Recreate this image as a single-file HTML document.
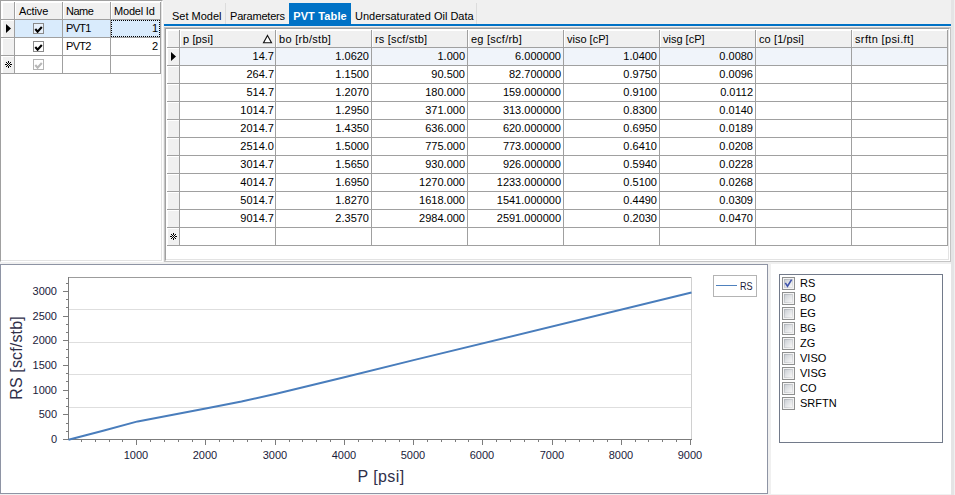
<!DOCTYPE html>
<html><head><meta charset="utf-8">
<style>
*{box-sizing:border-box;margin:0;padding:0}
html,body{width:955px;height:495px;overflow:hidden;background:#f0f0f0}
body{position:relative;font-family:"Liberation Sans","DejaVu Sans",sans-serif;font-size:11px;color:#000}
.abs{position:absolute}
/* left panel */
#lp{left:0;top:0;width:163px;height:262px;background:#fff;border-left:1px solid #a0a0a0;border-top:1px solid #a0a0a0;border-right:1px solid #fff;border-bottom:1px solid #fff;box-shadow:inset -1px -1px 0 #e3e3e3;overflow:hidden}
.cell{position:absolute;height:18px;line-height:17px;white-space:nowrap;overflow:hidden}
.hd{background:#f0f0f0;border-right:1px solid #a0a0a0;border-bottom:1px solid #a0a0a0;box-shadow:inset 1px 1px 0 #fff}
.t2{box-shadow:inset 1px 2px 0 #fff}
.l2{box-shadow:inset 2px 1px 0 #fff}
.tl2{box-shadow:inset 2px 2px 0 #fff}
.c{background:#fff;border-right:1px solid #a0a0a0;border-bottom:1px solid #a0a0a0}
.r{text-align:right;padding-right:2px}
.l{text-align:left;padding-left:3px}
.sel{background:#d9ebfc}
.sel .cb{background:#e8f1fb}
.f{background:#f0f4fa}
.lcb{position:absolute;left:0;top:0;width:13px;height:13px;border:1px solid #8e8f8f;background:linear-gradient(135deg,#cdd1d6,#f7f7f7) 2px 2px/7px 7px no-repeat,linear-gradient(135deg,#aeb3b9,#e9e9ea) 1px 1px/9px 9px no-repeat,#f4f4f4}
.cb{position:absolute;width:11px;height:11px;border:1px solid #8a8a8a;background:#fff}
/* tabs */
.tab{position:absolute;top:5px;height:19px;line-height:22px;font-size:11px;white-space:nowrap}
</style></head><body>

<!-- LEFT PANEL -->
<div id="lp" class="abs">
  <!-- header -->
  <div class="cell hd l2" style="left:0px;top:1px;width:14px;height:18px"></div>
  <div class="cell hd l" style="left:14px;top:1px;width:48px;height:18px;line-height:18px;padding-left:4px;letter-spacing:-0.13px">Active</div>
  <div class="cell hd l" style="left:62px;top:1px;width:48px;height:18px;line-height:18px;letter-spacing:-0.5px">Name</div>
  <div class="cell hd l" style="left:110px;top:1px;width:50px;height:18px;line-height:18px;letter-spacing:-0.2px">Model Id</div>
  <!-- row1 -->
  <div class="cell hd l2" style="left:0px;top:19px;width:14px"><svg width="13" height="17" style="position:absolute;left:0;top:0"><path d="M5 4 L10 8.5 L5 13 Z" fill="#000"/></svg></div>
  <div class="cell c sel" style="left:14px;top:19px;width:48px"><span class="cb" style="left:18px;top:3px"><svg width="9" height="9" style="position:absolute;left:0;top:0"><path d="M1.3 5 L3.6 7.7 L7.8 3" stroke="#000" stroke-width="2.1" fill="none"/></svg></span></div>
  <div class="cell c sel l" style="left:62px;top:19px;width:48px;letter-spacing:-0.7px">PVT1</div>
  <div class="cell c sel r" style="left:110px;top:19px;width:50px"><span style="position:absolute;left:0;top:0;right:0;bottom:0;border:1px dotted #000"></span>1</div>
  <!-- row2 -->
  <div class="cell hd l2" style="left:0px;top:37px;width:14px"></div>
  <div class="cell c" style="left:14px;top:37px;width:48px"><span class="cb" style="left:18px;top:3px"><svg width="9" height="9" style="position:absolute;left:0;top:0"><path d="M1.3 5 L3.6 7.7 L7.8 3" stroke="#000" stroke-width="2.1" fill="none"/></svg></span></div>
  <div class="cell c l" style="left:62px;top:37px;width:48px;letter-spacing:-0.7px">PVT2</div>
  <div class="cell c r" style="left:110px;top:37px;width:50px">2</div>
  <!-- row3 -->
  <div class="cell hd l2" style="left:0px;top:55px;width:14px"><svg width="7" height="7" shape-rendering="crispEdges" style="position:absolute;left:4px;top:5px"><path d="M3 0h1v1h-1zM1 1h1v1h-1zM3 1h1v1h-1zM5 1h1v1h-1zM2 2h1v1h-1zM4 2h1v1h-1zM0 3h1v1h-1zM1 3h1v1h-1zM3 3h1v1h-1zM5 3h1v1h-1zM6 3h1v1h-1zM2 4h1v1h-1zM4 4h1v1h-1zM1 5h1v1h-1zM3 5h1v1h-1zM5 5h1v1h-1zM3 6h1v1h-1z" fill="#000"/></svg></div>
  <div class="cell c" style="left:14px;top:55px;width:48px"><span class="cb" style="left:18px;top:3px;border-color:#b4b4b4"><svg width="9" height="9" style="position:absolute;left:0;top:0"><path d="M1.3 5 L3.6 7.7 L7.8 3" stroke="#b8b8b8" stroke-width="2.1" fill="none"/></svg></span></div>
  <div class="cell c" style="left:62px;top:55px;width:48px"></div>
  <div class="cell c" style="left:110px;top:55px;width:50px"></div>
</div>

<!-- TAB CONTROL -->
<div class="abs" style="left:164px;top:24px;width:787px;height:2px;background:#0072c6"></div>
<div class="tab" style="left:172px">Set Model</div>
<div class="abs" style="left:225px;top:3px;width:1px;height:21px;background:#dcdcdc"></div>
<div class="tab" style="left:230px;letter-spacing:-0.2px">Parameters</div>
<div class="tab" style="left:289px;top:3px;width:62px;height:23px;background:#0072c6;color:#fff;font-weight:bold;text-align:center;line-height:26px;letter-spacing:0.15px">PVT Table</div>
<div class="tab" style="left:355px">Undersaturated Oil Data</div>
<div class="abs" style="left:476px;top:3px;width:1px;height:21px;background:#dcdcdc"></div>

<!-- TAB PAGE / GRID -->
<div class="abs" style="left:951px;top:0;width:3px;height:495px;background:#e4e4e5"></div>
<div class="abs" style="left:164px;top:27px;width:787px;height:235px;border:1px solid #c4c4c4"></div>
<div id="gp" class="abs" style="left:165px;top:28px;width:785px;height:233px;background:#fff;border-left:1px solid #a0a0a0;border-top:1px solid #a0a0a0;border-right:1px solid #fff;border-bottom:1px solid #fff;box-shadow:inset -1px -1px 0 #e3e3e3"></div>
<div id="grid" class="abs" style="left:166px;top:29px;width:783px;height:231px">
<div class="cell hd" style="left:1px;top:1px;width:13px;height:18px"></div>
<div class="cell hd l" style="left:14px;top:1px;width:96px;height:18px;line-height:18px;letter-spacing:0.12px">p [psi]<svg width="11" height="11" style="position:absolute;left:82px;top:4px"><path d="M5.5 1.5 L9.5 8.7 L1.5 8.7 Z" fill="#fff" stroke="#111" stroke-width="1.1"/></svg></div>
<div class="cell hd l" style="left:110px;top:1px;width:96px;height:18px;line-height:18px;letter-spacing:0.3px">bo [rb/stb]</div>
<div class="cell hd l" style="left:206px;top:1px;width:96px;height:18px;line-height:18px;letter-spacing:0.17px">rs [scf/stb]</div>
<div class="cell hd l" style="left:302px;top:1px;width:96px;height:18px;line-height:18px;letter-spacing:0.25px">eg [scf/rb]</div>
<div class="cell hd l" style="left:398px;top:1px;width:96px;height:18px;line-height:18px;letter-spacing:0px">viso [cP]</div>
<div class="cell hd l" style="left:494px;top:1px;width:96px;height:18px;line-height:18px;letter-spacing:0px">visg [cP]</div>
<div class="cell hd l" style="left:590px;top:1px;width:96px;height:18px;line-height:18px;letter-spacing:0.1px">co [1/psi]</div>
<div class="cell hd l" style="left:686px;top:1px;width:96px;height:18px;line-height:18px;letter-spacing:0.36px">srftn [psi.ft]</div>
<div class="cell hd" style="left:1px;top:19px;width:13px"><svg width="12" height="17" style="position:absolute;left:0;top:0"><path d="M4 4 L9 8.5 L4 13 Z" fill="#000"/></svg></div>
<div class="cell c r f" style="left:14px;top:19px;width:96px;padding-right:1px">14.7</div>
<div class="cell c r f" style="left:110px;top:19px;width:96px">1.0620</div>
<div class="cell c r f" style="left:206px;top:19px;width:96px">1.000</div>
<div class="cell c r f" style="left:302px;top:19px;width:96px">6.000000</div>
<div class="cell c r f" style="left:398px;top:19px;width:96px">1.0400</div>
<div class="cell c r f" style="left:494px;top:19px;width:96px">0.0080</div>
<div class="cell c r f" style="left:590px;top:19px;width:96px"></div>
<div class="cell c r f" style="left:686px;top:19px;width:96px"></div>
<div class="cell hd" style="left:1px;top:37px;width:13px"></div>
<div class="cell c r" style="left:14px;top:37px;width:96px;padding-right:1px">264.7</div>
<div class="cell c r" style="left:110px;top:37px;width:96px">1.1500</div>
<div class="cell c r" style="left:206px;top:37px;width:96px">90.500</div>
<div class="cell c r" style="left:302px;top:37px;width:96px">82.700000</div>
<div class="cell c r" style="left:398px;top:37px;width:96px">0.9750</div>
<div class="cell c r" style="left:494px;top:37px;width:96px">0.0096</div>
<div class="cell c r" style="left:590px;top:37px;width:96px"></div>
<div class="cell c r" style="left:686px;top:37px;width:96px"></div>
<div class="cell hd" style="left:1px;top:55px;width:13px"></div>
<div class="cell c r" style="left:14px;top:55px;width:96px;padding-right:1px">514.7</div>
<div class="cell c r" style="left:110px;top:55px;width:96px">1.2070</div>
<div class="cell c r" style="left:206px;top:55px;width:96px">180.000</div>
<div class="cell c r" style="left:302px;top:55px;width:96px">159.000000</div>
<div class="cell c r" style="left:398px;top:55px;width:96px">0.9100</div>
<div class="cell c r" style="left:494px;top:55px;width:96px">0.0112</div>
<div class="cell c r" style="left:590px;top:55px;width:96px"></div>
<div class="cell c r" style="left:686px;top:55px;width:96px"></div>
<div class="cell hd" style="left:1px;top:73px;width:13px"></div>
<div class="cell c r" style="left:14px;top:73px;width:96px;padding-right:1px">1014.7</div>
<div class="cell c r" style="left:110px;top:73px;width:96px">1.2950</div>
<div class="cell c r" style="left:206px;top:73px;width:96px">371.000</div>
<div class="cell c r" style="left:302px;top:73px;width:96px">313.000000</div>
<div class="cell c r" style="left:398px;top:73px;width:96px">0.8300</div>
<div class="cell c r" style="left:494px;top:73px;width:96px">0.0140</div>
<div class="cell c r" style="left:590px;top:73px;width:96px"></div>
<div class="cell c r" style="left:686px;top:73px;width:96px"></div>
<div class="cell hd" style="left:1px;top:91px;width:13px"></div>
<div class="cell c r" style="left:14px;top:91px;width:96px;padding-right:1px">2014.7</div>
<div class="cell c r" style="left:110px;top:91px;width:96px">1.4350</div>
<div class="cell c r" style="left:206px;top:91px;width:96px">636.000</div>
<div class="cell c r" style="left:302px;top:91px;width:96px">620.000000</div>
<div class="cell c r" style="left:398px;top:91px;width:96px">0.6950</div>
<div class="cell c r" style="left:494px;top:91px;width:96px">0.0189</div>
<div class="cell c r" style="left:590px;top:91px;width:96px"></div>
<div class="cell c r" style="left:686px;top:91px;width:96px"></div>
<div class="cell hd" style="left:1px;top:109px;width:13px"></div>
<div class="cell c r" style="left:14px;top:109px;width:96px;padding-right:1px">2514.0</div>
<div class="cell c r" style="left:110px;top:109px;width:96px">1.5000</div>
<div class="cell c r" style="left:206px;top:109px;width:96px">775.000</div>
<div class="cell c r" style="left:302px;top:109px;width:96px">773.000000</div>
<div class="cell c r" style="left:398px;top:109px;width:96px">0.6410</div>
<div class="cell c r" style="left:494px;top:109px;width:96px">0.0208</div>
<div class="cell c r" style="left:590px;top:109px;width:96px"></div>
<div class="cell c r" style="left:686px;top:109px;width:96px"></div>
<div class="cell hd" style="left:1px;top:127px;width:13px"></div>
<div class="cell c r" style="left:14px;top:127px;width:96px;padding-right:1px">3014.7</div>
<div class="cell c r" style="left:110px;top:127px;width:96px">1.5650</div>
<div class="cell c r" style="left:206px;top:127px;width:96px">930.000</div>
<div class="cell c r" style="left:302px;top:127px;width:96px">926.000000</div>
<div class="cell c r" style="left:398px;top:127px;width:96px">0.5940</div>
<div class="cell c r" style="left:494px;top:127px;width:96px">0.0228</div>
<div class="cell c r" style="left:590px;top:127px;width:96px"></div>
<div class="cell c r" style="left:686px;top:127px;width:96px"></div>
<div class="cell hd" style="left:1px;top:145px;width:13px"></div>
<div class="cell c r" style="left:14px;top:145px;width:96px;padding-right:1px">4014.7</div>
<div class="cell c r" style="left:110px;top:145px;width:96px">1.6950</div>
<div class="cell c r" style="left:206px;top:145px;width:96px">1270.000</div>
<div class="cell c r" style="left:302px;top:145px;width:96px">1233.000000</div>
<div class="cell c r" style="left:398px;top:145px;width:96px">0.5100</div>
<div class="cell c r" style="left:494px;top:145px;width:96px">0.0268</div>
<div class="cell c r" style="left:590px;top:145px;width:96px"></div>
<div class="cell c r" style="left:686px;top:145px;width:96px"></div>
<div class="cell hd" style="left:1px;top:163px;width:13px"></div>
<div class="cell c r" style="left:14px;top:163px;width:96px;padding-right:1px">5014.7</div>
<div class="cell c r" style="left:110px;top:163px;width:96px">1.8270</div>
<div class="cell c r" style="left:206px;top:163px;width:96px">1618.000</div>
<div class="cell c r" style="left:302px;top:163px;width:96px">1541.000000</div>
<div class="cell c r" style="left:398px;top:163px;width:96px">0.4490</div>
<div class="cell c r" style="left:494px;top:163px;width:96px">0.0309</div>
<div class="cell c r" style="left:590px;top:163px;width:96px"></div>
<div class="cell c r" style="left:686px;top:163px;width:96px"></div>
<div class="cell hd" style="left:1px;top:181px;width:13px"></div>
<div class="cell c r" style="left:14px;top:181px;width:96px;padding-right:1px">9014.7</div>
<div class="cell c r" style="left:110px;top:181px;width:96px">2.3570</div>
<div class="cell c r" style="left:206px;top:181px;width:96px">2984.000</div>
<div class="cell c r" style="left:302px;top:181px;width:96px">2591.000000</div>
<div class="cell c r" style="left:398px;top:181px;width:96px">0.2030</div>
<div class="cell c r" style="left:494px;top:181px;width:96px">0.0470</div>
<div class="cell c r" style="left:590px;top:181px;width:96px"></div>
<div class="cell c r" style="left:686px;top:181px;width:96px"></div>
<div class="cell hd" style="left:1px;top:199px;width:13px"><svg width="7" height="7" shape-rendering="crispEdges" style="position:absolute;left:3px;top:5px"><path d="M3 0h1v1h-1zM1 1h1v1h-1zM3 1h1v1h-1zM5 1h1v1h-1zM2 2h1v1h-1zM4 2h1v1h-1zM0 3h1v1h-1zM1 3h1v1h-1zM3 3h1v1h-1zM5 3h1v1h-1zM6 3h1v1h-1zM2 4h1v1h-1zM4 4h1v1h-1zM1 5h1v1h-1zM3 5h1v1h-1zM5 5h1v1h-1zM3 6h1v1h-1z" fill="#000"/></svg></div>
<div class="cell c r" style="left:14px;top:199px;width:96px;padding-right:1px"></div>
<div class="cell c r" style="left:110px;top:199px;width:96px"></div>
<div class="cell c r" style="left:206px;top:199px;width:96px"></div>
<div class="cell c r" style="left:302px;top:199px;width:96px"></div>
<div class="cell c r" style="left:398px;top:199px;width:96px"></div>
<div class="cell c r" style="left:494px;top:199px;width:96px"></div>
<div class="cell c r" style="left:590px;top:199px;width:96px"></div>
<div class="cell c r" style="left:686px;top:199px;width:96px"></div>
</div>

<!-- CHART PANEL -->
<div id="cp" class="abs" style="left:0;top:264px;width:768px;height:230px;background:#fff;border:1px solid #8e94a4"></div>
<svg id="chart" class="abs" style="left:0;top:264px" width="768" height="230" font-family="Liberation Sans, sans-serif">
<rect x="69" y="45" width="622" height="1" fill="#dedede"/>
<rect x="69" y="78" width="622" height="1" fill="#dedede"/>
<rect x="69" y="110" width="622" height="1" fill="#dedede"/>
<rect x="69" y="143" width="622" height="1" fill="#dedede"/>
<rect x="68" y="13" width="624" height="1" fill="#9c9c9c"/>
<rect x="691" y="13" width="1" height="162" fill="#d0d0d0"/>
<rect x="68" y="13" width="1" height="163" fill="#7c7c7c"/>
<rect x="68" y="175" width="624" height="1" fill="#7c7c7c"/>
<rect x="63" y="175" width="5" height="1" fill="#7c7c7c"/>
<text x="57" y="179" font-size="11" text-anchor="end" fill="#1a1a3a">0</text>
<rect x="63" y="150" width="5" height="1" fill="#7c7c7c"/>
<text x="57" y="154" font-size="11" text-anchor="end" fill="#1a1a3a">500</text>
<rect x="63" y="126" width="5" height="1" fill="#7c7c7c"/>
<text x="57" y="130" font-size="11" text-anchor="end" fill="#1a1a3a">1000</text>
<rect x="63" y="101" width="5" height="1" fill="#7c7c7c"/>
<text x="57" y="105" font-size="11" text-anchor="end" fill="#1a1a3a">1500</text>
<rect x="63" y="76" width="5" height="1" fill="#7c7c7c"/>
<text x="57" y="80" font-size="11" text-anchor="end" fill="#1a1a3a">2000</text>
<rect x="63" y="52" width="5" height="1" fill="#7c7c7c"/>
<text x="57" y="56" font-size="11" text-anchor="end" fill="#1a1a3a">2500</text>
<rect x="63" y="27" width="5" height="1" fill="#7c7c7c"/>
<text x="57" y="31" font-size="11" text-anchor="end" fill="#1a1a3a">3000</text>
<rect x="66" y="167" width="2" height="1" fill="#7c7c7c"/>
<rect x="66" y="159" width="2" height="1" fill="#7c7c7c"/>
<rect x="66" y="142" width="2" height="1" fill="#7c7c7c"/>
<rect x="66" y="134" width="2" height="1" fill="#7c7c7c"/>
<rect x="66" y="117" width="2" height="1" fill="#7c7c7c"/>
<rect x="66" y="109" width="2" height="1" fill="#7c7c7c"/>
<rect x="66" y="93" width="2" height="1" fill="#7c7c7c"/>
<rect x="66" y="85" width="2" height="1" fill="#7c7c7c"/>
<rect x="66" y="68" width="2" height="1" fill="#7c7c7c"/>
<rect x="66" y="60" width="2" height="1" fill="#7c7c7c"/>
<rect x="66" y="43" width="2" height="1" fill="#7c7c7c"/>
<rect x="66" y="35" width="2" height="1" fill="#7c7c7c"/>
<rect x="66" y="19" width="2" height="1" fill="#7c7c7c"/>
<rect x="136" y="175" width="1" height="6" fill="#7c7c7c"/>
<text x="136" y="195" font-size="11" text-anchor="middle" fill="#1a1a3a">1000</text>
<rect x="205" y="175" width="1" height="6" fill="#7c7c7c"/>
<text x="205" y="195" font-size="11" text-anchor="middle" fill="#1a1a3a">2000</text>
<rect x="275" y="175" width="1" height="6" fill="#7c7c7c"/>
<text x="275" y="195" font-size="11" text-anchor="middle" fill="#1a1a3a">3000</text>
<rect x="344" y="175" width="1" height="6" fill="#7c7c7c"/>
<text x="344" y="195" font-size="11" text-anchor="middle" fill="#1a1a3a">4000</text>
<rect x="413" y="175" width="1" height="6" fill="#7c7c7c"/>
<text x="413" y="195" font-size="11" text-anchor="middle" fill="#1a1a3a">5000</text>
<rect x="482" y="175" width="1" height="6" fill="#7c7c7c"/>
<text x="482" y="195" font-size="11" text-anchor="middle" fill="#1a1a3a">6000</text>
<rect x="552" y="175" width="1" height="6" fill="#7c7c7c"/>
<text x="552" y="195" font-size="11" text-anchor="middle" fill="#1a1a3a">7000</text>
<rect x="621" y="175" width="1" height="6" fill="#7c7c7c"/>
<text x="621" y="195" font-size="11" text-anchor="middle" fill="#1a1a3a">8000</text>
<rect x="690" y="175" width="1" height="6" fill="#7c7c7c"/>
<text x="690" y="195" font-size="11" text-anchor="middle" fill="#1a1a3a">9000</text>
<rect x="81" y="175" width="1" height="3" fill="#7c7c7c"/>
<rect x="95" y="175" width="1" height="3" fill="#7c7c7c"/>
<rect x="109" y="175" width="1" height="3" fill="#7c7c7c"/>
<rect x="122" y="175" width="1" height="3" fill="#7c7c7c"/>
<rect x="150" y="175" width="1" height="3" fill="#7c7c7c"/>
<rect x="164" y="175" width="1" height="3" fill="#7c7c7c"/>
<rect x="178" y="175" width="1" height="3" fill="#7c7c7c"/>
<rect x="192" y="175" width="1" height="3" fill="#7c7c7c"/>
<rect x="219" y="175" width="1" height="3" fill="#7c7c7c"/>
<rect x="233" y="175" width="1" height="3" fill="#7c7c7c"/>
<rect x="247" y="175" width="1" height="3" fill="#7c7c7c"/>
<rect x="261" y="175" width="1" height="3" fill="#7c7c7c"/>
<rect x="289" y="175" width="1" height="3" fill="#7c7c7c"/>
<rect x="302" y="175" width="1" height="3" fill="#7c7c7c"/>
<rect x="316" y="175" width="1" height="3" fill="#7c7c7c"/>
<rect x="330" y="175" width="1" height="3" fill="#7c7c7c"/>
<rect x="358" y="175" width="1" height="3" fill="#7c7c7c"/>
<rect x="372" y="175" width="1" height="3" fill="#7c7c7c"/>
<rect x="385" y="175" width="1" height="3" fill="#7c7c7c"/>
<rect x="399" y="175" width="1" height="3" fill="#7c7c7c"/>
<rect x="427" y="175" width="1" height="3" fill="#7c7c7c"/>
<rect x="441" y="175" width="1" height="3" fill="#7c7c7c"/>
<rect x="455" y="175" width="1" height="3" fill="#7c7c7c"/>
<rect x="468" y="175" width="1" height="3" fill="#7c7c7c"/>
<rect x="496" y="175" width="1" height="3" fill="#7c7c7c"/>
<rect x="510" y="175" width="1" height="3" fill="#7c7c7c"/>
<rect x="524" y="175" width="1" height="3" fill="#7c7c7c"/>
<rect x="538" y="175" width="1" height="3" fill="#7c7c7c"/>
<rect x="565" y="175" width="1" height="3" fill="#7c7c7c"/>
<rect x="579" y="175" width="1" height="3" fill="#7c7c7c"/>
<rect x="593" y="175" width="1" height="3" fill="#7c7c7c"/>
<rect x="607" y="175" width="1" height="3" fill="#7c7c7c"/>
<rect x="635" y="175" width="1" height="3" fill="#7c7c7c"/>
<rect x="648" y="175" width="1" height="3" fill="#7c7c7c"/>
<rect x="662" y="175" width="1" height="3" fill="#7c7c7c"/>
<rect x="676" y="175" width="1" height="3" fill="#7c7c7c"/>
<text x="381" y="218" font-size="16" letter-spacing="0.4" text-anchor="middle" fill="#30304a">P [psi]</text>
<text transform="translate(22,94) rotate(-90)" font-size="16" letter-spacing="0.15" text-anchor="middle" fill="#30304a">RS [scf/stb]</text>
<polyline points="68.5,175.7 85.8,171.2 103.1,166.8 137.7,157.4 207.0,144.3 241.5,137.5 276.2,129.8 345.4,113.0 414.6,95.9 691.5,28.5" fill="none" stroke="#497dbc" stroke-width="2" stroke-linejoin="round"/>
<rect x="713.5" y="11.5" width="43" height="21" fill="#fff" stroke="#b4b4b4"/>
<rect x="716" y="21" width="21" height="1" fill="#4f81bd"/>
<text x="740" y="26" font-size="11" textLength="12.6" lengthAdjust="spacingAndGlyphs" fill="#1a1a3a">RS</text>
</svg>

<!-- RIGHT PANEL -->
<div id="rp" class="abs" style="left:771px;top:264px;width:180px;height:230px;background:#fff"></div>
<div id="lb" class="abs" style="left:779px;top:274px;width:164px;height:169px;background:#fff;border:1px solid #727a8a">
<div style="position:absolute;left:2px;top:2px;height:15px;line-height:13px;font-size:11px;padding-left:18px"><span class="lcb"><svg width="9" height="9" style="position:absolute;left:1px;top:1px"><path d="M1.3 3.9 L3.5 7.2 L7.6 0.6" stroke="#3f53ab" stroke-width="1.6" fill="none"/></svg></span>RS</div>
<div style="position:absolute;left:2px;top:17px;height:15px;line-height:13px;font-size:11px;padding-left:18px"><span class="lcb"></span>BO</div>
<div style="position:absolute;left:2px;top:32px;height:15px;line-height:13px;font-size:11px;padding-left:18px"><span class="lcb"></span>EG</div>
<div style="position:absolute;left:2px;top:47px;height:15px;line-height:13px;font-size:11px;padding-left:18px"><span class="lcb"></span>BG</div>
<div style="position:absolute;left:2px;top:62px;height:15px;line-height:13px;font-size:11px;padding-left:18px"><span class="lcb"></span>ZG</div>
<div style="position:absolute;left:2px;top:77px;height:15px;line-height:13px;font-size:11px;padding-left:18px"><span class="lcb"></span>VISO</div>
<div style="position:absolute;left:2px;top:92px;height:15px;line-height:13px;font-size:11px;padding-left:18px"><span class="lcb"></span>VISG</div>
<div style="position:absolute;left:2px;top:107px;height:15px;line-height:13px;font-size:11px;padding-left:18px"><span class="lcb"></span>CO</div>
<div style="position:absolute;left:2px;top:122px;height:15px;line-height:13px;font-size:11px;padding-left:18px"><span class="lcb"></span>SRFTN</div>
</div>

</body></html>
